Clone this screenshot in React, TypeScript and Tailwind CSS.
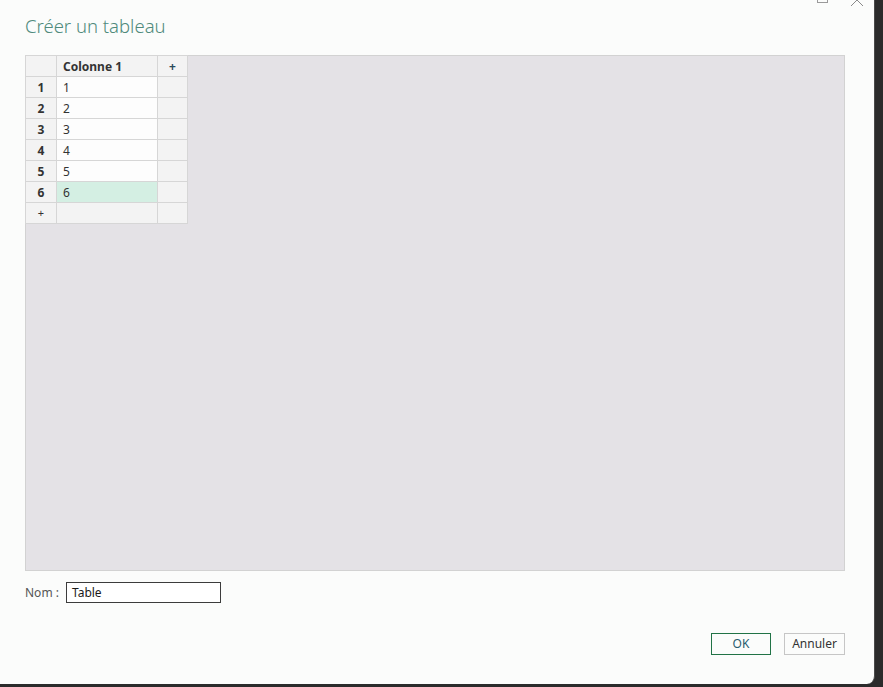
import React from 'react';

const rows = ['1', '2', '3', '4', '5', '6'];

function WindowButtons() {
  // only the lower edges of the caption buttons peek into the frame
  return (
    <div className="absolute right-0 top-0 h-[6px] w-[80px] overflow-hidden">
      <div className="absolute left-[23px] top-[-8px] h-[11px] w-[11px] border border-[#9a9a9a]" />
      <svg className="absolute left-[56px] top-[-7px]" width="14" height="14" viewBox="0 0 14 14">
        <path d="M1 1 L13 13 M13 1 L1 13" stroke="#8a8a8a" strokeWidth="1" fill="none" />
      </svg>
    </div>
  );
}

function Grid() {
  return (
    <table className="border-collapse text-[12px] text-[#333]">
      <thead>
        <tr className="h-[21px]">
          <th className="w-[31px] border border-[#d6d6d6] bg-[#f3f3f3] p-0" />
          <th className="w-[101px] border border-[#d6d6d6] bg-[#f3f3f3] pl-[6px] pt-px text-left font-bold text-[#333]">Colonne 1</th>
          <th className="w-[30px] border border-[#d6d6d6] bg-[#f3f3f3] pt-px text-center font-bold text-[#2b4a5a]">+</th>
        </tr>
      </thead>
      <tbody>
        {rows.map((r) => (
          <tr key={r} className="h-[21px]">
            <td className="border border-[#d6d6d6] bg-[#f3f3f3] pt-px text-center font-bold">{r}</td>
            <td className={`border border-[#d6d6d6] pl-[6px] pt-px ${r === '6' ? 'bg-[#d4efe3]' : 'bg-[#fdfdfd]'}`}>{r}</td>
            <td className="border border-[#d6d6d6] bg-[#f3f3f3]" />
          </tr>
        ))}
        <tr className="h-[21px]">
          <td className="border border-[#d6d6d6] bg-[#f3f3f3] pt-px text-center text-[11px]">+</td>
          <td className="border border-[#d6d6d6] bg-[#f3f3f3]" />
          <td className="border border-[#d6d6d6] bg-[#f3f3f3]" />
        </tr>
      </tbody>
    </table>
  );
}

export default function App() {
  return (
    <div className="flex h-[687px] w-[883px] bg-[#2b2b2b] font-['Segoe_UI','Noto_Sans','Open_Sans',sans-serif]">
      <div className="relative flex h-[684px] w-[875px] flex-col rounded-br-[8px] border-r border-[#4a4a4a] bg-[#fbfcfb] pl-[25px] pr-[29px]">
        <WindowButtons />
        <h1 className="pt-[12px] text-[18.5px] font-light leading-[28px] text-[#4f8a7c]">Créer un tableau</h1>
        <div className="mt-[15px] h-[516px] w-[820px] border border-[#d2d2d2] bg-[#e4e2e6]">
          <div className="-ml-px -mt-px">
            <Grid />
          </div>
        </div>
        <div className="mt-[11px] flex items-center gap-[7px] text-[12px]">
          <span className="text-[#555]">Nom :</span>
          <div className="flex h-[21px] w-[155px] items-center border border-[#3c3c3c] bg-white pl-[5px] text-[#1a1a1a]">
            Table
          </div>
        </div>
        <div className="mt-[30px] flex justify-end gap-[13px] text-[12px]">
          <button className="h-[22px] w-[60px] border border-[#217346] bg-[#fbfcfb] text-[#2a5d6e]">OK</button>
          <button className="h-[22px] w-[61px] border border-[#c6c6c6] bg-[#fbfcfb] text-[#333]">Annuler</button>
        </div>
      </div>
    </div>
  );
}
